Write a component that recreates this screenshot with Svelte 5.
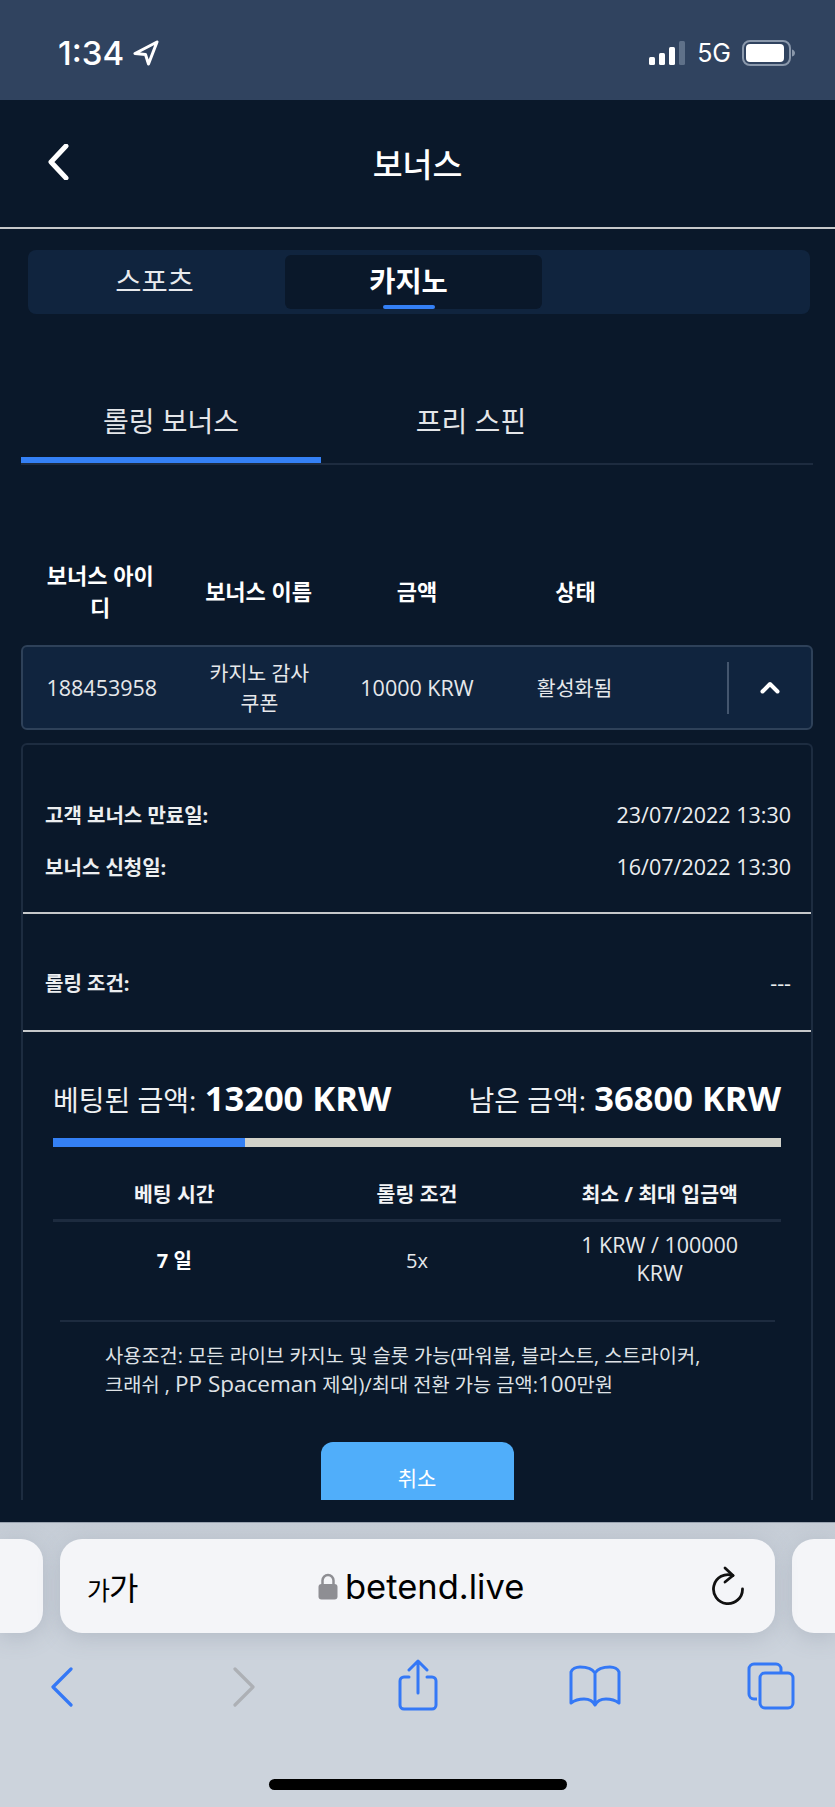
<script>
  const headers = ["보너스 아이디", "보너스 이름", "금액", "상태"];
</script>

<div class="phone">
  <div class="status">
    <div class="time">
      <span>1:34</span>
      <svg width="26" height="26" viewBox="0 0 26 26"><path d="M24 2 2 13.500l10.500 1L15.500 24z" fill="none" stroke="#fff" stroke-width="3" stroke-linejoin="round"/></svg>
    </div>
    <div class="indicators">
      <svg width="37" height="24" viewBox="0 0 37 24">
        <rect x="0" y="16" width="6" height="8" rx="1.5" fill="#fff"/>
        <rect x="10" y="12" width="6" height="12" rx="1.5" fill="#fff"/>
        <rect x="20" y="6" width="6" height="18" rx="1.5" fill="#fff"/>
        <rect x="30" y="0" width="6" height="24" rx="1.5" fill="#5f7189"/>
      </svg>
      <span class="net">5G</span>
      <svg width="54" height="26" viewBox="0 0 54 26">
        <rect x="1" y="1" width="47" height="24" rx="7" fill="none" stroke="#8a98ab" stroke-width="2"/>
        <rect x="4" y="4" width="38" height="18" rx="4" fill="#fff"/>
        <path d="M50 9.500c2 .5 3 2 3 3.500s-1 3-3 3.500z" fill="#8a98ab"/>
      </svg>
    </div>
  </div>

  <div class="page">
    <div class="nav">
      <svg class="back" width="22" height="36" viewBox="0 0 22 36"><path d="M19 2 4 18l15 16" fill="none" stroke="#fff" stroke-width="5" stroke-linecap="round" stroke-linejoin="round"/></svg>
      <h1>보너스</h1>
    </div>

    <div class="top-tabs">
      <div class="top-tab">스포츠</div>
      <div class="top-tab active">카지노</div>
      <div class="top-tab"></div>
    </div>

    <div class="sub-tabs">
      <div class="sub-tab active">롤링 보너스</div>
      <div class="sub-tab">프리 스핀</div>
    </div>

    <div class="head-row">
      {#each headers as h}
        <div>{h}</div>
      {/each}
    </div>

    <div class="bonus-row">
      <div class="num">188453958</div>
      <div>카지노 감사<br />쿠폰</div>
      <div class="num">10000 KRW</div>
      <div>활성화됨</div>
      <div class="toggle-cell">
        <div class="toggle">
          <svg width="20" height="13" viewBox="0 0 20 13"><path d="M2.500 10.500 10 3l7.500 7.500" fill="none" stroke="#fff" stroke-width="4" stroke-linecap="round" stroke-linejoin="round"/></svg>
        </div>
      </div>
    </div>

    <div class="detail">
      <div class="dates">
        <div class="kv"><b>고객 보너스 만료일:</b><span>23/07/2022 13:30</span></div>
        <div class="kv"><b>보너스 신청일:</b><span>16/07/2022 13:30</span></div>
      </div>
      <div class="rolling">
        <div class="kv"><b>롤링 조건:</b><span>---</span></div>
      </div>
      <div class="progress-wrap">
        <div class="amounts">
          <div>베팅된 금액: <b>13200 KRW</b></div>
          <div>남은 금액: <b>36800 KRW</b></div>
        </div>
        <div class="bar"><div class="fill" style="width: {(13200 / 50000) * 100}%"></div></div>
        <div class="cond-head">
          <div>베팅 시간</div>
          <div>롤링 조건</div>
          <div>최소 / 최대 입금액</div>
        </div>
        <div class="cond-row">
          <div class="strong">7 일</div>
          <div>5x</div>
          <div class="num">1 KRW / 100000<br />KRW</div>
        </div>
      </div>
      <div class="terms">
        사용조건: 모든 라이브 카지노 및 슬롯 가능(파워볼, 블라스트, 스트라이커,<br />
        크래쉬 , <span class="latin">PP Spaceman</span> 제외)/최대 전환 가능 금액:<span class="latin">100</span>만원
      </div>
      <button class="cancel">취소</button>
    </div>
  </div>
  <div class="page-foot"></div>

  <div class="browser">
    <div class="url-row">
      <div class="url side left"></div>
      <div class="url main">
        <span class="aa"><small>가</small>가</span>
        <div class="address">
          <svg width="20" height="27" viewBox="0 0 20 27"><path d="M4.500 12V7.500a5.500 5.500 0 0 1 11 0V12" fill="none" stroke="#8e8e93" stroke-width="2.500"/><rect x="0.500" y="11" width="19" height="15.500" rx="3" fill="#8e8e93"/></svg>
          <span>betend.live</span>
        </div>
        <svg width="34" height="40" viewBox="0 0 34 40"><path d="M22 9.500A14.500 14.500 0 1 0 31.500 23" fill="none" stroke="#111" stroke-width="2.800" stroke-linecap="round" transform="translate(-1 0)"/><path d="M13 2l8 7.500-8 6.500" fill="none" stroke="#111" stroke-width="2.800" stroke-linecap="round" stroke-linejoin="round"/></svg>
      </div>
      <div class="url side right"></div>
    </div>
    <div class="toolbar">
      <svg class="chev" width="22" height="40" viewBox="0 0 22 40"><path d="M20 2 2 20l18 18" fill="none" stroke="#3478f6" stroke-width="3.200" stroke-linecap="round" stroke-linejoin="round"/></svg>
      <svg class="chev" width="22" height="40" viewBox="0 0 22 40"><path d="M2 2l18 18L2 38" fill="none" stroke="#adb0b5" stroke-width="3.200" stroke-linecap="round" stroke-linejoin="round"/></svg>
      <svg width="40" height="52" viewBox="0 0 40 52"><path d="M11 18H6a4 4 0 0 0-4 4v24a4 4 0 0 0 4 4h28a4 4 0 0 0 4-4V22a4 4 0 0 0-4-4h-5M20 34V3M11 11l9-9 9 9" fill="none" stroke="#3478f6" stroke-width="3" stroke-linecap="round" stroke-linejoin="round"/></svg>
      <svg class="low" width="52" height="42" viewBox="0 0 52 42"><path d="M26 8C23 3 17 2 11 2 7 2 3 4 2 7v31c4-3 9-4 13-4 5 0 9 2 11 6 2-4 6-6 11-6 4 0 9 1 13 4V7c-1-3-5-5-9-5-6 0-12 1-15 6zM26 8v32" fill="none" stroke="#3478f6" stroke-width="3" stroke-linejoin="round"/></svg>
      <svg class="low" width="48" height="48" viewBox="0 0 48 48"><path d="M10 37H7a5 5 0 0 1-5-5V7a5 5 0 0 1 5-5h22a5 5 0 0 1 5 5v3" fill="none" stroke="#3478f6" stroke-width="3"/><rect x="13" y="11" width="33" height="35" rx="5" fill="none" stroke="#3478f6" stroke-width="3"/></svg>
    </div>
    <div class="home-bar"></div>
  </div>
</div>

<style>
  :global(body) {
    margin: 0;
    background: #0a182a;
  }

  .phone {
    width: 835px;
    height: 1807px;
    display: flex;
    flex-direction: column;
    overflow: hidden;
    background: #0a182a;
    color: #fff;
    font-family: "Open Sans", "Noto Sans CJK KR", sans-serif;
  }

  .status {
    height: 100px;
    flex: none;
    box-sizing: border-box;
    background: #30435f;
    display: flex;
    align-items: center;
    justify-content: space-between;
    padding: 6px 39px 0 58px;
  }

  .time {
    display: flex;
    align-items: center;
    gap: 9px;
    font-family: Inter, sans-serif;
    font-size: 33px;
    font-weight: 500;
  }

  .indicators {
    display: flex;
    align-items: center;
    gap: 11px;
  }

  .net {
    font-family: Inter, sans-serif;
    font-size: 25px;
  }

  .page {
    height: 1400px;
    flex: none;
    overflow: hidden;
  }

  .page-foot {
    height: 22px;
    flex: none;
  }

  .nav {
    height: 129px;
    box-sizing: border-box;
    position: relative;
    display: flex;
    align-items: center;
    justify-content: center;
    border-bottom: 2px solid #c6c8ca;
  }

  .back {
    position: absolute;
    left: 47px;
    top: 44px;
  }

  h1 {
    margin: 0;
    font-size: 32.5px;
    font-weight: 500;
    position: relative;
    top: -1px;
  }

  .top-tabs {
    margin: 21px 25px 0 28px;
    height: 64px;
    box-sizing: border-box;
    padding: 5px 0;
    border-radius: 8px;
    background: #10243e;
    display: grid;
    grid-template-columns: 257px 257px 1fr;
  }

  .top-tab {
    display: flex;
    align-items: center;
    justify-content: center;
    font-size: 28.5px;
    color: #e8eaed;
    border-radius: 6px;
    position: relative;
    padding: 0 4px 5px 0;
  }

  .top-tab.active {
    background: #0a182a;
    font-weight: 700;
    color: #fff;
    padding-right: 10px;
  }

  .top-tab.active::after {
    content: "";
    position: absolute;
    left: 98px;
    width: 52px;
    bottom: 0;
    height: 4px;
    border-radius: 2px;
    background: #3480f5;
  }

  .sub-tabs {
    margin: 74px 22px 0 21px;
    height: 75px;
    display: grid;
    grid-template-columns: 300px 300px 1fr;
    border-bottom: 2px solid #1d2b3f;
  }

  .sub-tab {
    display: flex;
    align-items: center;
    justify-content: center;
    font-size: 28px;
    color: #e4e6e9;
    height: 75px;
    box-sizing: border-box;
    padding-bottom: 11px;
  }

  .sub-tab.active {
    border-bottom: 6px solid #3480f5;
    padding-bottom: 5px;
    margin-bottom: -1px;
  }

  .head-row {
    margin: 94px 22px 0 21px;
    display: grid;
    grid-template-columns: repeat(5, minmax(0, 1fr));
    align-items: center;
    text-align: center;
    font-size: 22px;
    font-weight: 700;
    line-height: 32px;
    height: 63px;
  }

  .head-row > div {
    padding: 0 18px;
  }

  .bonus-row {
    margin: 23px 22px 0 21px;
    height: 85px;
    box-sizing: border-box;
    background: #10243e;
    border: 2px solid #2e4159;
    border-radius: 6px;
    display: grid;
    grid-template-columns: repeat(5, minmax(0, 1fr));
    align-items: center;
    text-align: center;
    font-size: 20.5px;
    line-height: 30px;
    color: #e6e8eb;
  }

  .num {
    font-size: 21.5px;
  }

  .toggle-cell {
    display: flex;
    justify-content: flex-end;
  }

  .toggle {
    width: 84px;
    height: 52px;
    box-sizing: border-box;
    border-left: 2px solid #44566e;
    display: flex;
    align-items: center;
    justify-content: center;
  }

  .detail {
    margin: 13px 22px 0 21px;
    border: 2px solid #1d2c40;
    border-bottom: none;
    border-radius: 6px 6px 0 0;
  }

  .kv {
    display: flex;
    justify-content: space-between;
    align-items: center;
    font-size: 20px;
    color: #eceef0;
  }

  .kv b {
    font-weight: 700;
  }

  .kv span {
    font-size: 21.5px;
  }

  .dates {
    height: 169px;
    box-sizing: border-box;
    padding: 55px 20px 0 22px;
    border-bottom: 2px solid #c6c8ca;
    display: flex;
    flex-direction: column;
    gap: 24px;
  }

  .dates .kv {
    height: 28px;
  }

  .rolling {
    height: 118px;
    box-sizing: border-box;
    padding: 54px 20px 0 22px;
    border-bottom: 2px solid #c6c8ca;
  }

  .rolling .kv {
    height: 28px;
  }

  .progress-wrap {
    margin: 0 30px;
  }

  .amounts {
    display: flex;
    justify-content: space-between;
    align-items: center;
    height: 48px;
    margin-top: 41px;
    font-size: 28px;
    color: #eef0f2;
    white-space: nowrap;
  }

  .amounts b {
    font-size: 34.5px;
    font-weight: 700;
    color: #fff;
    margin-left: 1px;
  }

  .bar {
    height: 9px;
    margin-top: 17px;
    background: #d2d2ca;
  }

  .fill {
    height: 100%;
    background: #3480f5;
  }

  .cond-head,
  .cond-row {
    display: grid;
    grid-template-columns: repeat(3, minmax(0, 1fr));
    text-align: center;
    align-items: center;
  }

  .cond-head {
    height: 75px;
    box-sizing: border-box;
    padding-top: 19px;
    font-size: 20.5px;
    font-weight: 700;
    border-bottom: 3px solid #1d2b3f;
    color: #f2f3f5;
  }

  .cond-row {
    height: 77px;
    font-size: 20px;
    line-height: 28px;
    color: #e6e8eb;
  }

  .cond-row > div {
    padding: 0 40px;
  }

  .cond-row > .num {
    font-size: 21.5px;
    padding: 0 20px 4px;
  }

  .strong {
    font-weight: 700;
    color: #fff;
  }

  .terms {
    margin: 21px 36px 0 37px;
    border-top: 2px solid #1d2b3f;
    padding: 20px 20px 0 45px;
    font-size: 19.8px;
    line-height: 28px;
    color: #dfe2e6;
    white-space: nowrap;
  }

  .latin {
    font-size: 22.5px;
  }

  .cancel {
    display: block;
    width: 193px;
    height: 74px;
    margin: 43px auto 0;
    border: none;
    border-radius: 12px;
    background: #50aefa;
    color: #fff;
    font-family: inherit;
    font-size: 21px;
    padding: 0 0 4px;
  }

  .browser {
    flex: 1;
    background: linear-gradient(#c6cdd6, #ccd3dc 14%);
    border-top: 1px solid #9aa3af;
    display: flex;
    flex-direction: column;
    box-sizing: border-box;
  }

  .url-row {
    display: grid;
    grid-template-columns: 43px 715px 43px;
    column-gap: 17px;
    margin: 16px 0 0 0;
  }

  .url {
    height: 94px;
    background: #f4f5f8;
    border-radius: 22px;
    box-shadow: 0 4px 22px rgba(120, 130, 145, 0.3);
  }

  .side.left {
    border-radius: 0 22px 22px 0;
  }

  .side.right {
    border-radius: 22px 0 0 22px;
  }

  .main {
    display: flex;
    align-items: center;
    justify-content: space-between;
    padding: 0 29px 0 27px;
    position: relative;
    color: #000;
  }

  .aa {
    font-size: 32px;
    letter-spacing: -1px;
  }

  .aa small {
    font-size: 25px;
  }

  .address {
    position: absolute;
    left: 258px;
    top: 0;
    height: 94px;
    display: flex;
    align-items: center;
    gap: 7px;
    font-family: Inter, sans-serif;
    font-size: 34.5px;
  }

  .toolbar {
    display: grid;
    grid-template-columns: 182px 165px 171px 178px auto;
    align-items: center;
    height: 52px;
    margin-top: 26px;
    padding-left: 51px;
  }

  .chev {
    margin-top: 4px;
  }

  .low {
    margin-top: 2px;
  }

  .home-bar {
    width: 298px;
    height: 11px;
    border-radius: 6px;
    background: #000;
    margin: 68px auto 0;
  }
</style>
